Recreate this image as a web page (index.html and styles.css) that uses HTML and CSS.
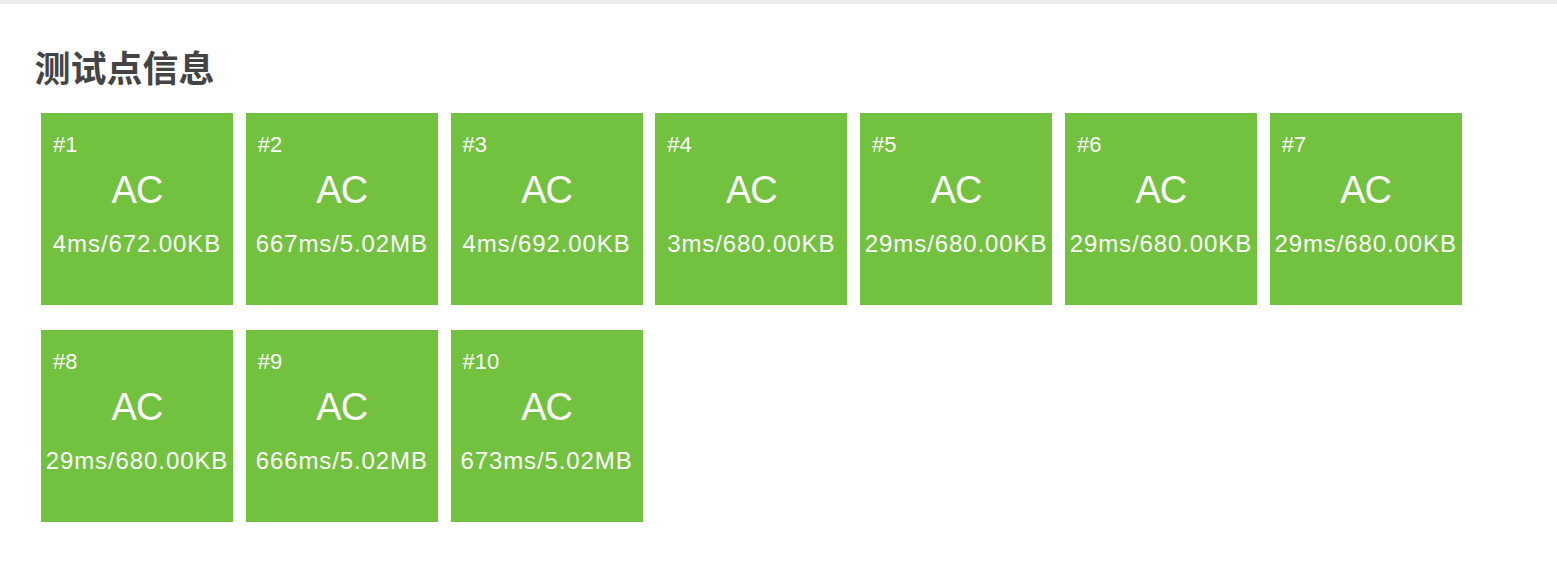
FILE: index.html
```html
<!DOCTYPE html>
<html>
<head>
<meta charset="utf-8">
<title>测试点信息</title>
<link rel="stylesheet" href="styles.css">
</head>
<body>
<div class="topbar"></div>
<div class="panel">
  <h2 class="title">测试点信息</h2>
  <div class="cases">
    <div class="case"><div class="case-id">#1</div><div class="case-status">AC</div><div class="case-info">4ms/672.00KB</div></div>
    <div class="case"><div class="case-id">#2</div><div class="case-status">AC</div><div class="case-info">667ms/5.02MB</div></div>
    <div class="case"><div class="case-id">#3</div><div class="case-status">AC</div><div class="case-info">4ms/692.00KB</div></div>
    <div class="case"><div class="case-id">#4</div><div class="case-status">AC</div><div class="case-info">3ms/680.00KB</div></div>
    <div class="case"><div class="case-id">#5</div><div class="case-status">AC</div><div class="case-info">29ms/680.00KB</div></div>
    <div class="case"><div class="case-id">#6</div><div class="case-status">AC</div><div class="case-info">29ms/680.00KB</div></div>
    <div class="case"><div class="case-id">#7</div><div class="case-status">AC</div><div class="case-info">29ms/680.00KB</div></div>
    <div class="case"><div class="case-id">#8</div><div class="case-status">AC</div><div class="case-info">29ms/680.00KB</div></div>
    <div class="case"><div class="case-id">#9</div><div class="case-status">AC</div><div class="case-info">666ms/5.02MB</div></div>
    <div class="case"><div class="case-id">#10</div><div class="case-status">AC</div><div class="case-info">673ms/5.02MB</div></div>
  </div>
</div>
</body>
</html>
```
FILE: styles.css
```css
html, body {
  margin: 0;
  background: #fff;
  font-family: "Liberation Sans", Arial, "Noto Sans CJK SC", sans-serif;
}

.topbar {
  height: 4px;
  background: #ececec;
}

.panel {
  padding: 0 0 0 34.6px;
}

.title {
  margin: 42px 0 0 0;
  height: 67px;
  font-family: "Noto Sans CJK SC", sans-serif;
  font-size: 36px;
  line-height: 40px;
  font-weight: bold;
  color: #444;
}

.cases {
  display: flex;
  flex-wrap: wrap;
  row-gap: 25px;
}

.case {
  width: 192px;
  height: 192px;
  margin: 0 6.4px;
  background: #72c13f;
  color: #fff;
  display: flex;
  flex-direction: column;
}

.case-id {
  padding: 20px 0 0 12px;
  font-size: 22px;
  line-height: 24px;
}

.case-status {
  margin-top: 10.6px;
  text-align: center;
  font-size: 38px;
  line-height: 44px;
  letter-spacing: -1px;
}

.case-info {
  margin-top: 18.5px;
  text-align: center;
  font-size: 24px;
  line-height: 28px;
  letter-spacing: 0.9px;
  white-space: nowrap;
  margin-left: -10px;
  margin-right: -10px;
}
```
